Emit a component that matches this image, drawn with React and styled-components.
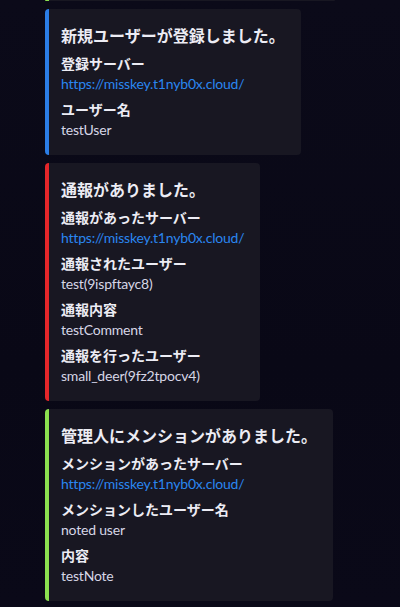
import React from "react";
import styled, { createGlobalStyle } from "styled-components";

const Global = createGlobalStyle`
  html, body { margin: 0; padding: 0; background: #0a0917; }
  body {
    font-family: Lato, "Noto Sans CJK JP", sans-serif;
    color: #dcdce8;
    overflow: hidden;
    height: 607px;
  }
`;

const Page = styled.div`
  background: linear-gradient(180deg, #0b0a19 0%, #090816 60%, #0a0918 100%);
  min-height: 607px;
  padding-left: 45px;
`;

const List = styled.div`
  display: flex;
  flex-direction: column;
  align-items: flex-start;
  gap: 8px;
`;

const PrevTail = styled.div`
  width: 286px;
  height: 1px;
  background: #181722;
  border-left: 4px solid #8be04f;
  border-radius: 0 0 4px 4px;
`;

const Embed = styled.div`
  width: fit-content;
  box-sizing: border-box;
  background: #181722;
  border-left: 4px solid ${(p) => p.$accent};
  border-radius: 4px;
  padding: 8px 16px 16px 12px;
`;

const Title = styled.div`
  margin-top: 8px;
  font-size: 16px;
  line-height: 22px;
  font-weight: 700;
  color: #ececf4;
  white-space: nowrap;
`;

const Fields = styled.div`
  margin-top: 8px;
  display: grid;
  gap: 8px;
`;

const Field = styled.div`
  display: flex;
  flex-direction: column;
`;

const Name = styled.div`
  font-size: 14px;
  line-height: 18px;
  font-weight: 700;
  color: #ececf4;
  margin-bottom: 2px;
  white-space: nowrap;
`;

const Value = styled.div`
  font-size: 14px;
  line-height: 18px;
  letter-spacing: -0.2px;
  color: ${(p) => (p.$link ? "#2a86f0" : "#d6d6e6")};
  white-space: nowrap;
`;

const URL = "https://misskey.t1nyb0x.cloud/";

const embeds = [
  {
    accent: "#2b7de6",
    title: "新規ユーザーが登録しました。",
    fields: [
      ["登録サーバー", URL, true],
      ["ユーザー名", "testUser"],
    ],
  },
  {
    accent: "#e5262a",
    title: "通報がありました。",
    fields: [
      ["通報があったサーバー", URL, true],
      ["通報されたユーザー", "test(9ispftayc8)"],
      ["通報内容", "testComment"],
      ["通報を行ったユーザー", "small_deer(9fz2tpocv4)"],
    ],
  },
  {
    accent: "#8be04f",
    title: "管理人にメンションがありました。",
    fields: [
      ["メンションがあったサーバー", URL, true],
      ["メンションしたユーザー名", "noted user"],
      ["内容", "testNote"],
    ],
  },
];

export default function App() {
  return (
    <>
      <Global />
      <Page>
        <List>
          <PrevTail />
          {embeds.map((e, i) => (
            <Embed key={i} $accent={e.accent}>
              <Title>{e.title}</Title>
              <Fields>
                {e.fields.map(([n, v, link], j) => (
                  <Field key={j}>
                    <Name>{n}</Name>
                    <Value $link={link}>{v}</Value>
                  </Field>
                ))}
              </Fields>
            </Embed>
          ))}
        </List>
      </Page>
    </>
  );
}
